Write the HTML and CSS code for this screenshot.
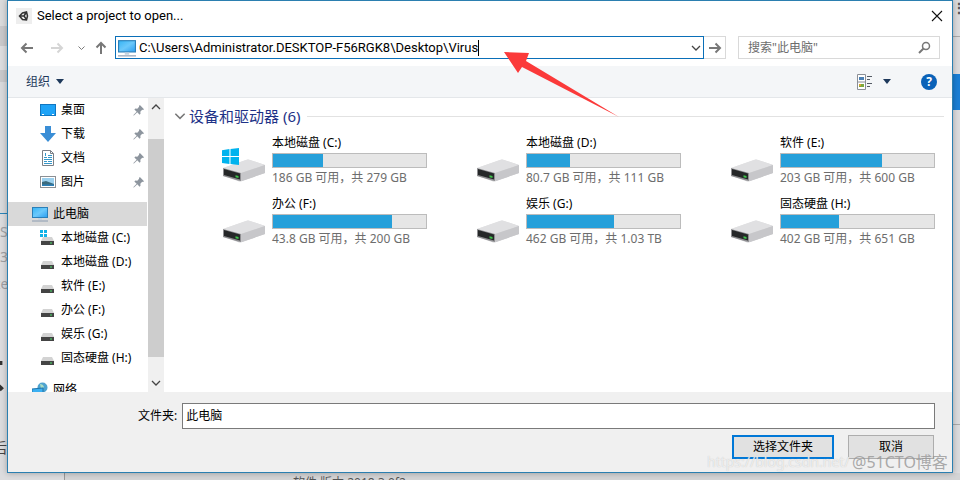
FILE: index.html
```
<!DOCTYPE html>
<html lang="zh-CN">
<head>
  <meta charset="UTF-8">
  <title>Select a project to open...</title>
  <link rel="stylesheet" href="styles.css">
</head>
<body>
  <!-- shared icons -->
  <svg class="defs" aria-hidden="true">
    <defs>
      <linearGradient id="screen" x1="0" y1="0" x2="1" y2="1">
        <stop offset="0" stop-color="#35b4f5"/><stop offset=".5" stop-color="#6cc9fb"/><stop offset="1" stop-color="#2a9df0"/>
      </linearGradient>
      <linearGradient id="metal" x1="0" y1="0" x2="1" y2="1">
        <stop offset="0" stop-color="#e9e9ea"/><stop offset="1" stop-color="#c6c6c9"/>
      </linearGradient>
    </defs>
    <symbol id="pc" viewBox="0 0 16 16">
      <rect x=".5" y="1.5" width="15" height="10" fill="url(#screen)" stroke="#2b7fb8"/>
      <path d="M6 12h4v2H6z" fill="#c5d3df"/><path d="M0 15h16" stroke="#8a9bb0"/>
    </symbol>
    <symbol id="pin" viewBox="0 0 12 12">
      <path d="M7.500 0L12 4.500l-1 1-1-.2-2 2 .2 2.200-1 1L4.700 8 1 11.500H.5V11L4 7.300 1.500 4.800l1-1 2.200.2 2-2-.2-1z" fill="#8d959e"/>
    </symbol>
    <symbol id="disk" viewBox="0 0 16 16">
      <path d="M3 6h9l2 4H1z" fill="#d3d3d3"/><path d="M1 10h13v4H1z" fill="#444"/><path d="M10 11.500h2v1h-2z" fill="#4be36b"/>
    </symbol>
    <symbol id="drive" viewBox="0 0 44 34">
      <path d="M1 20L24 12q2-1 4 0l15 5v8L20 33q-2 1-4 0L1 28z" fill="url(#metal)"/>
      <path d="M1 20L24 12q2-1 4 0l15 5-24 8z" fill="#e0e0e2"/>
      <path d="M19 25l24-8v8L20 33l-1-1z" fill="#c7c7ca"/>
      <path d="M1 20l18 5v8l-3-.5L1 28z" fill="#8e8e91"/>
      <path d="M2 21l16 4.500v6L2 27z" fill="#252728"/>
      <path d="M13.500 27.200l3 .8v2l-3-.8z" fill="#3fc34a"/>
    </symbol>
    <symbol id="flag" viewBox="0 0 16 16">
      <path d="M0 2l7-1v6.500H0zM8 1l8-1v7.500H8zM0 8.500h7V15l-7-1zM8 8.500h8V16l-8-1z" fill="#00b3ee"/>
    </symbol>
    <symbol id="chevron" viewBox="0 0 12 8"><path d="M2 2l4 4 4-4" fill="none" stroke="currentColor" stroke-width="1.300"/></symbol>
    <symbol id="arrow" viewBox="0 0 14 12"><path d="M1 6h11M7.500 1.500L12 6l-4.500 4.500" fill="none" stroke="currentColor" stroke-width="2"/></symbol>
  </svg>

  <!-- windows behind the dialog -->
  <div class="behind" aria-hidden="true">
    <div class="behind-window"></div>
    <span class="scrap scrap-s">S</span>
    <span class="scrap scrap-3">3</span>
    <span class="scrap scrap-ze">ze</span>
    <span class="scrap scrap-big">不</span>
    <span class="scrap scrap-hou">后</span>
    <span class="scrap scrap-dots">⋮</span>
    <div class="scrap-button"></div>
    <div class="behind-panel"></div>
    <div class="behind-foot"><span>软件 版本 2018.3.0f2</span></div>
  </div>

  <main class="dialog">
    <header class="titlebar">
      <svg class="app-icon" viewBox="0 0 16 16"><rect width="16" height="16" fill="#eee"/><path d="M3.500 8l3-3 4-1 1 4-1 4-4-.500zM3.500 8H8m0 0l2.500-4M8 8l2.500 3.500" fill="none" stroke="#333" stroke-width="1.500"/></svg>
      <h1>Select a project to open...</h1>
      <button class="close" aria-label="关闭"><svg viewBox="0 0 12 12"><path d="M1 1l10 10M11 1L1 11" stroke="#111" stroke-width="1.100"/></svg></button>
    </header>

    <nav class="navbar">
      <button class="nav-btn" aria-label="后退"><svg class="flip" width="14" height="12"><use href="#arrow"/></svg></button>
      <button class="nav-btn forward" aria-label="前进"><svg width="14" height="12"><use href="#arrow"/></svg></button>
      <button class="nav-btn recent" aria-label="最近"><svg width="9" height="6"><use href="#chevron"/></svg></button>
      <button class="nav-btn up" aria-label="向上"><svg class="turn" width="14" height="12"><use href="#arrow"/></svg></button>
      <div class="address">
        <svg width="18" height="18"><use href="#pc"/></svg>
        <input type="text" aria-label="地址" value="C:\Users\Administrator.DESKTOP-F56RGK8\Desktop\Virus">
        <span class="caret"></span>
        <button class="history" aria-label="以前的位置"><svg width="12" height="8"><use href="#chevron"/></svg></button>
      </div>
      <button class="go" aria-label="转到"><svg width="14" height="12"><use href="#arrow"/></svg></button>
      <div class="search">
        <input type="search" aria-label="搜索" placeholder="搜索&quot;此电脑&quot;">
        <svg width="13" height="13" viewBox="0 0 13 13"><circle cx="8" cy="5" r="3.500" fill="none" stroke="#777" stroke-width="1.500"/><path d="M5.500 7.500L1 12" stroke="#777" stroke-width="2"/></svg>
      </div>
    </nav>

    <div class="toolbar">
      <button class="organize">组织 <span class="triangle"></span></button>
      <button class="view" aria-label="更改视图">
        <svg width="16" height="16" viewBox="0 0 16 16"><path d="M.5.5h8v15h-8zM.5 8h8" fill="#fff" stroke="#8b8f96"/><path d="M2 3h5v3H2z" fill="#4a80b5"/><path d="M2 10h5v3H2z" fill="#7ca83c"/><path d="M2 10h2v2H2z" fill="#d7a331"/><path d="M10 2.500h5M10 5.500h3M10 9.500h5M10 12.500h3" stroke="#555c66"/></svg>
        <span class="triangle"></span>
      </button>
      <button class="help" aria-label="帮助">?</button>
    </div>

    <div class="panes">
      <aside class="tree">
        <ul>
          <li><svg class="icon" viewBox="0 0 16 16"><rect x=".5" y="2.500" width="15" height="11" fill="#1ea3f7" stroke="#1176c0"/><path d="M2 12.500h2m8 0h2" stroke="#fff"/></svg><a href="#">桌面</a><svg class="pin"><use href="#pin"/></svg></li>
          <li><svg class="icon" viewBox="0 0 16 16"><path d="M5 0h6v7h5l-8 9-8-9h5z" fill="#3a8ed6"/></svg><a href="#">下载</a><svg class="pin"><use href="#pin"/></svg></li>
          <li><svg class="icon" viewBox="0 0 16 16"><path d="M2.500.5h8l3 3v12h-11z" fill="#fff" stroke="#7b8087"/><path d="M10.500.5v3h3" fill="none" stroke="#7b8087"/><path d="M4 7.500h3M8 5.500h4M8 7.500h4M4 9.500h8M4 11.500h3M8 11.500h4M4 13.500h8" stroke="#3597c9"/><path d="M5.500 3v3" stroke="#3597c9"/></svg><a href="#">文档</a><svg class="pin"><use href="#pin"/></svg></li>
          <li><svg class="icon" viewBox="0 0 16 16"><rect x=".5" y="2.500" width="15" height="11" fill="#fff" stroke="#8b8f94"/><path d="M2 4h12v8H2z" fill="#9bd0ee"/><path d="M2 8l4-1 8 3v2H2z" fill="#3a6a7d"/><path d="M2 10.500h12V12H2z" fill="#2a7fb8"/></svg><a href="#">图片</a><svg class="pin"><use href="#pin"/></svg></li>
        </ul>
        <ul>
          <li class="root selected"><svg class="icon"><use href="#pc"/></svg><a href="#">此电脑</a></li>
          <li><svg class="icon" viewBox="0 0 16 16"><use href="#disk" y="1"/><path d="M0 0h3v3H0zM4 0h3v3H4zM0 4h3v3H0zM4 4h3v3H4z" fill="#10b2e8"/></svg><a href="#">本地磁盘 (C:)</a></li>
          <li><svg class="icon"><use href="#disk" y="1"/></svg><a href="#">本地磁盘 (D:)</a></li>
          <li><svg class="icon"><use href="#disk" y="1"/></svg><a href="#">软件 (E:)</a></li>
          <li><svg class="icon"><use href="#disk" y="1"/></svg><a href="#">办公 (F:)</a></li>
          <li><svg class="icon"><use href="#disk" y="1"/></svg><a href="#">娱乐 (G:)</a></li>
          <li><svg class="icon"><use href="#disk" y="1"/></svg><a href="#">固态硬盘 (H:)</a></li>
        </ul>
        <ul>
          <li class="root"><svg class="icon" viewBox="0 0 16 16"><circle cx="10.500" cy="5.500" r="5" fill="#4fa3cf"/><path d="M8 2q3 0 4 3l-3 2z" fill="#a9dcc4"/><path d="M0 7l11-1v8L0 13z" fill="#3bb0f2" stroke="#2074aa"/></svg><a href="#">网络</a></li>
        </ul>
      </aside>
      <div class="scrollbar" aria-hidden="true">
        <svg class="half" width="12" height="8"><use href="#chevron"/></svg>
        <div class="thumb"></div>
        <svg width="12" height="8"><use href="#chevron"/></svg>
      </div>

      <section class="content">
        <h2><svg width="14" height="10"><use href="#chevron"/></svg>设备和驱动器 (6)</h2>
        <div class="drives">
          <article class="drive">
            <svg class="drive-icon" viewBox="0 0 44 34"><use href="#drive" width="44" height="34"/><use href="#flag" width="17" height="17"/></svg>
            <div class="info"><h3>本地磁盘 (C:)</h3><div class="bar"><div class="fill" style="width: 33%"></div></div><p>186 GB 可用，共 279 GB</p></div>
          </article>
          <article class="drive">
            <svg class="drive-icon"><use href="#drive"/></svg>
            <div class="info"><h3>本地磁盘 (D:)</h3><div class="bar"><div class="fill" style="width: 28%"></div></div><p>80.7 GB 可用，共 111 GB</p></div>
          </article>
          <article class="drive">
            <svg class="drive-icon"><use href="#drive"/></svg>
            <div class="info"><h3>软件 (E:)</h3><div class="bar"><div class="fill" style="width: 66%"></div></div><p>203 GB 可用，共 600 GB</p></div>
          </article>
          <article class="drive">
            <svg class="drive-icon"><use href="#drive"/></svg>
            <div class="info"><h3>办公 (F:)</h3><div class="bar"><div class="fill" style="width: 78%"></div></div><p>43.8 GB 可用，共 200 GB</p></div>
          </article>
          <article class="drive">
            <svg class="drive-icon"><use href="#drive"/></svg>
            <div class="info"><h3>娱乐 (G:)</h3><div class="bar"><div class="fill" style="width: 57%"></div></div><p>462 GB 可用，共 1.03 TB</p></div>
          </article>
          <article class="drive">
            <svg class="drive-icon"><use href="#drive"/></svg>
            <div class="info"><h3>固态硬盘 (H:)</h3><div class="bar"><div class="fill" style="width: 38%"></div></div><p>402 GB 可用，共 651 GB</p></div>
          </article>
        </div>
      </section>
    </div>

    <form class="footer">
      <div class="field">
        <label for="folder">文件夹:</label>
        <input type="text" id="folder" value="此电脑">
      </div>
      <div class="buttons">
        <button type="button" class="primary">选择文件夹</button>
        <button type="button">取消</button>
      </div>
    </form>
  </main>

  <!-- annotations on top -->
  <svg class="pointer" viewBox="0 0 116 66" aria-hidden="true"><path d="M0 0l25 1-3 8 93 56L18 15l-4 6z" fill="#fb3a3a"/></svg>
  <span class="mark mark-url">https://blog.csdn.net/</span>
  <span class="mark mark-site">@51CTO博客</span>
</body>
</html>
```
FILE: styles.css
```
* {
  box-sizing: border-box;
}
body {
  position: relative;
  display: flex;
  height: 100vh;
  margin: 0;
  padding: 0 7px 7px;
  overflow: hidden;
  background: #dcdcde;
  font-family: "Noto Sans", "Noto Sans CJK SC", sans-serif;
  font-size: 12px;
  line-height: 16px;
  color: #000;
}
h1, h2, h3, p, ul {
  margin: 0;
  padding: 0;
  font-size: 12px;
  font-weight: normal;
}
button, input {
  font: inherit;
  color: inherit;
}
button {
  padding: 0;
  border: none;
  background: none;
}
input {
  min-width: 0;
  padding: 0;
  border: none;
  outline: none;
  background: none;
}
svg {
  flex: none;
  display: block;
}
.defs {
  position: absolute;
  width: 0;
  height: 0;
}

/* background windows */
.behind {
  position: absolute;
  inset: 0;
  overflow: hidden;
}
.behind-window {
  position: absolute;
  top: 0;
  left: 0;
  width: 8px;
  height: 214px;
  border-bottom: 1px solid #2b84b8;
  background: linear-gradient(#dadbdc 26px, #c9c9cb 26px, #c9c9cb 46px, #dcdddf 46px, #dcdddf 70px, #c9c9cb 70px, #c9c9cb 82px, #d9dadc 82px);
}
.behind-panel {
  position: absolute;
  right: 0;
  top: 36px;
  width: 7px;
  height: 389px;
  border-top: 1px solid #aaa;
  border-bottom: 1px solid #aaa;
}
.scrap {
  position: absolute;
  left: 0;
  font-size: 14px;
  color: #a0a0a3;
}
.scrap-s { top: 224px; }
.scrap-3 { top: 249px; }
.scrap-ze { top: 276px; left: -6px; }
.scrap-big {
  top: 350px;
  left: -46px;
  font-size: 52px;
  line-height: 64px;
  color: #333;
}
.scrap-hou { top: 440px; left: -7px; color: #444; }
.scrap-dots { top: 0; left: 952px; font-weight: bold; color: #555; }
.scrap-button {
  position: absolute;
  top: 74px;
  right: 0;
  width: 7px;
  height: 36px;
  background: #1a7fd6;
}
.behind-foot {
  position: absolute;
  left: 64px;
  right: 0;
  bottom: 0;
  height: 7px;
  padding: 2px 0 0 228px;
  overflow: hidden;
  border-left: 1px solid #999;
  background: #d4d4d5;
  color: #555;
}

.dialog {
  position: relative;
  flex: 1;
  display: flex;
  flex-direction: column;
  min-width: 0;
  border: 1px solid #2b7fb0;
  background: #fff;
  box-shadow: 0 0 6px rgba(0, 0, 0, 0.3);
}
.titlebar {
  display: flex;
  align-items: center;
  height: 29px;
  padding: 0 9px 0 8px;
}
.app-icon {
  width: 16px;
  height: 16px;
  margin-right: 5px;
}
.titlebar h1 {
  flex: 1;
  font-family: Roboto, sans-serif;
  font-size: 13px;
}
.close svg {
  width: 12px;
  height: 12px;
}

.navbar {
  display: flex;
  height: 36px;
  padding: 6px 12px 7px;
}
.nav-btn {
  display: flex;
  align-items: center;
  justify-content: center;
  width: 30px;
  padding-right: 16px;
  color: #777;
}
.nav-btn.forward {
  width: 26px;
  padding-right: 12px;
  color: #d5d5d5;
}
.nav-btn.recent {
  width: 10px;
  margin-right: 7px;
  padding: 0;
}
.nav-btn.up {
  width: 16px;
  margin-right: 6px;
  padding: 0;
}
.flip, .half {
  transform: rotate(180deg);
}
.turn {
  transform: rotate(-90deg);
}
.address {
  flex: 1;
  display: flex;
  align-items: center;
  padding: 0 1px 0 2px;
  border: 1px solid #0a6fb8;
}
.address input {
  field-sizing: content;
  margin-left: 3px;
  font-family: Roboto, sans-serif;
  font-size: 13px;
}
.caret {
  width: 1px;
  height: 16px;
  background: #000;
}
.history {
  margin-left: auto;
  color: #444;
}
.go {
  display: flex;
  align-items: center;
  justify-content: center;
  width: 22px;
  border: 1px solid #d9d9d9;
  border-left: none;
  color: #777;
}
.search {
  display: flex;
  align-items: center;
  width: 202px;
  margin-left: 12px;
  padding: 0 8px 0 9px;
  border: 1px solid #d9d9d9;
}
.search input {
  flex: 1;
}
.search input::placeholder {
  color: #6d6d6d;
}

.toolbar {
  display: flex;
  align-items: center;
  height: 32px;
  padding: 0 15px 0 18px;
  border-bottom: 1px solid #e4e7ea;
  background: #f4f6f8;
  color: #1e395b;
}
.organize, .view {
  display: flex;
  align-items: center;
  gap: 6px;
}
.view {
  gap: 10px;
  margin-left: auto;
}
.triangle {
  border: 4px solid transparent;
  border-top: 5px solid #1e395b;
  border-bottom: none;
}
.help {
  width: 16px;
  height: 16px;
  margin-left: 30px;
  border-radius: 50%;
  background: #0a62b8;
  color: #fff;
  font-weight: bold;
}

.panes {
  flex: 1;
  display: flex;
  min-height: 0;
}
.tree {
  width: 139px;
  overflow: hidden;
}
.tree ul {
  margin-bottom: 8px;
  list-style: none;
}
.tree li {
  display: flex;
  align-items: center;
  gap: 5px;
  height: 24px;
  padding: 0 3px 0 32px;
}
.tree li.root {
  padding-left: 24px;
}
.tree li.selected {
  background: #d9d9d9;
}
.tree a {
  flex: 1;
  color: inherit;
  text-decoration: none;
  white-space: nowrap;
}
.icon {
  width: 16px;
  height: 16px;
}
.pin {
  width: 11px;
  height: 11px;
}
.scrollbar {
  display: flex;
  flex-direction: column;
  align-items: center;
  width: 16px;
  margin-left: 1px;
  padding: 5px 0;
  background: #f0f0f0;
  color: #444;
}
.thumb {
  flex: 1;
  width: 100%;
  margin: 28px 0 22px;
  background: #cdcdcd;
}

.content {
  flex: 1;
  min-width: 0;
  padding: 7px 8px 0 9px;
}
.content h2 {
  display: flex;
  align-items: center;
  gap: 2px;
  font-size: 15px;
  line-height: 22px;
  color: #1e3287;
}
.content h2 svg {
  color: #777;
}
.content h2::after {
  content: "";
  flex: 1;
  height: 1px;
  margin-left: 5px;
  background: #e2e2e2;
}
.drives {
  display: grid;
  grid-template-columns: repeat(3, 1fr);
  row-gap: 10px;
  margin-top: 8px;
  padding-right: 9px;
}
.drive {
  display: flex;
  gap: 6px;
  padding-left: 49px;
}
.drive-icon {
  width: 44px;
  height: 34px;
  margin-top: 13px;
}
.info {
  flex: 1;
}
.bar {
  height: 15px;
  margin: 2px 0;
  border: 1px solid #bcbcbc;
  background: #e6e6e6;
}
.fill {
  height: 100%;
  background: #26a0da;
}
.info p {
  color: #6d6d6d;
}

.footer {
  height: 80px;
  padding: 11px 17px 0 130px;
  background: #f0f0f0;
}
.field {
  display: flex;
  align-items: center;
  gap: 5px;
}
.field input {
  flex: 1;
  height: 26px;
  padding: 0 3px 3px;
  border: 1px solid #7a7a7a;
  background: #fff;
}
.buttons {
  display: flex;
  justify-content: flex-end;
  gap: 14px;
  margin-top: 6px;
  padding-right: 1px;
}
.buttons button {
  width: 86px;
  height: 24px;
  border: 1px solid #adadad;
  background: #e1e1e1;
}
.buttons .primary {
  width: 102px;
  border: 2px solid #0078d7;
}

.pointer {
  position: absolute;
  top: 52px;
  left: 504px;
  width: 116px;
  height: 66px;
}
.mark {
  position: absolute;
  white-space: nowrap;
}
.mark-url {
  top: 452px;
  left: 707px;
  font-size: 14px;
  line-height: 20px;
  color: rgba(255, 255, 255, 0.7);
  text-shadow: 0 0 1px #bbb;
}
.mark-site {
  top: 452px;
  left: 852px;
  font-size: 16px;
  line-height: 20px;
  color: rgba(150, 150, 150, 0.8);
}
```
